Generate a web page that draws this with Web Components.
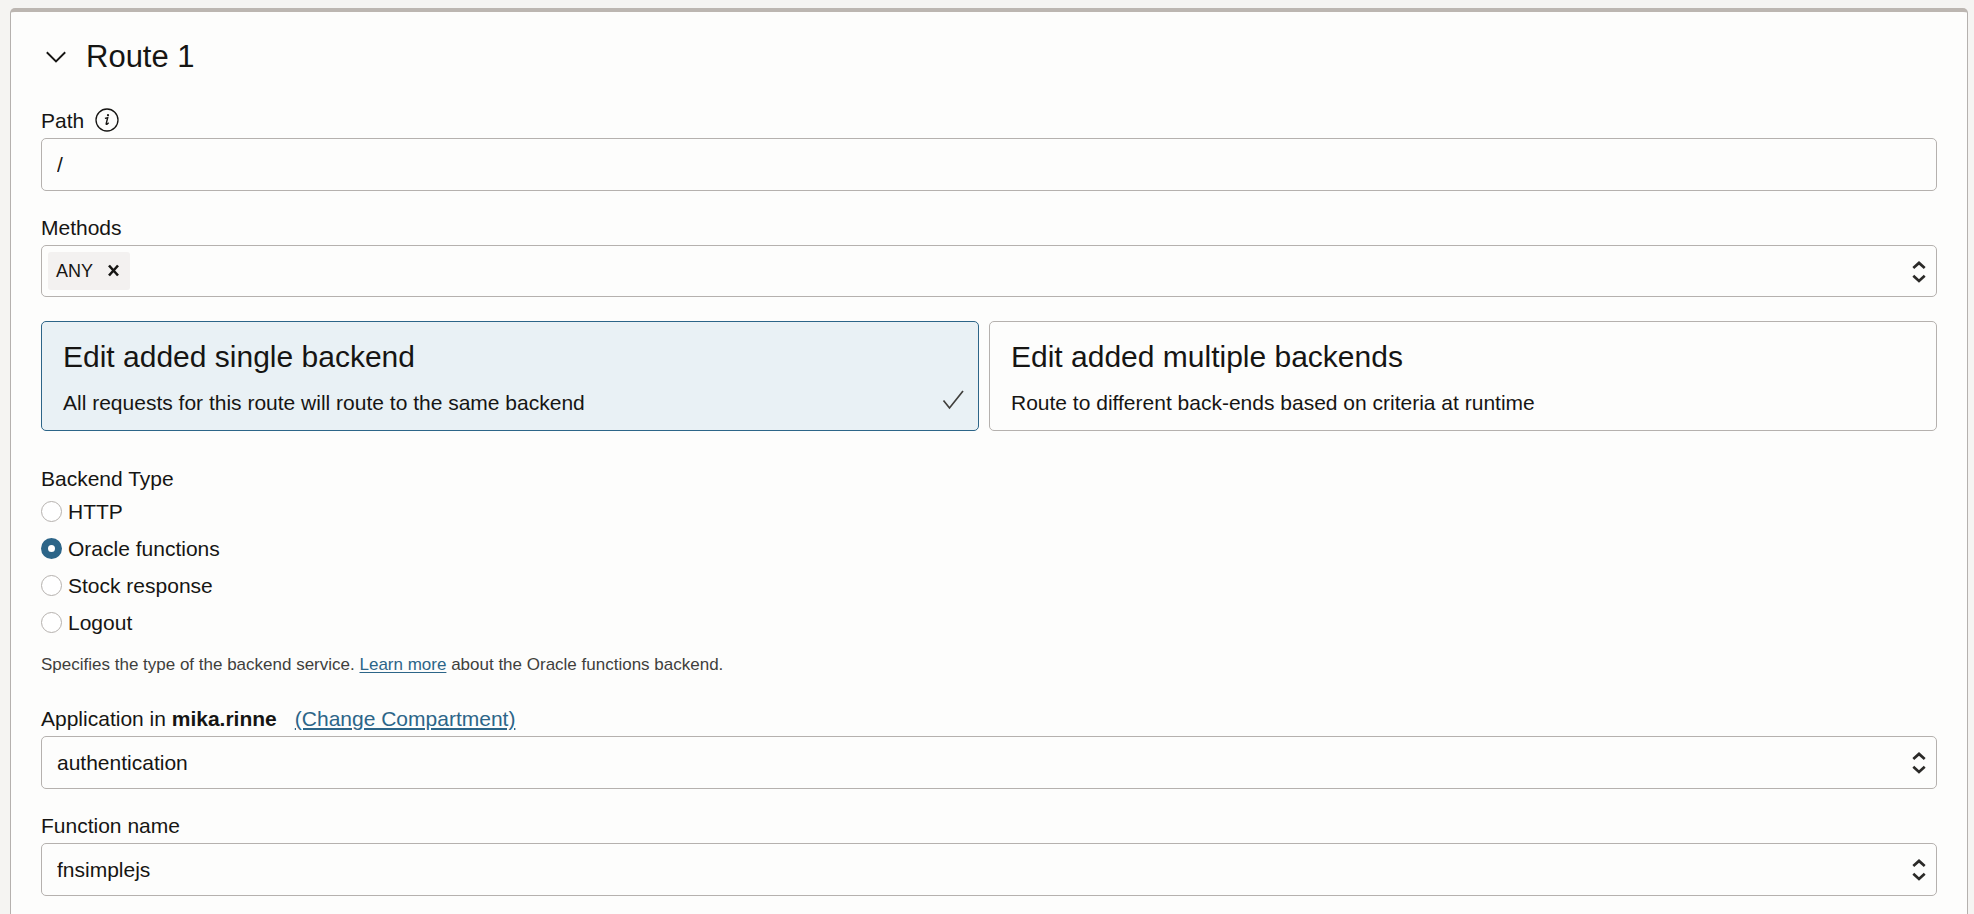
<!DOCTYPE html>
<html lang="en">
<head>
<meta charset="utf-8">
<title>Route 1</title>
<style>
  :root {
    --ink: #161513;
    --line: #b5b1ae;
    --surface: #fdfdfc;
    --accent: #2c6588;
  }
  body {
    margin: 0;
    padding: 8px 6px 0 10px;
    box-sizing: border-box;
    min-height: 100vh;
    display: flex;
    flex-direction: column;
    background: #f5f4f2;
    color: var(--ink);
    font: 21px/26px "Liberation Sans", Arial, sans-serif;
  }
  route-panel { flex: 1; display: flex; flex-direction: column; }
  .choices { display: grid; grid-template-columns: 1fr 1fr; }
  .choices choice-card:first-child { margin-right: 10px; }
</style>
</head>
<body>
<route-panel>
  <span slot="title">Route 1</span>
  <text-field value="/">Path</text-field>
  <tag-field tag="ANY">Methods</tag-field>
  <div class="choices">
    <choice-card selected>
      <span slot="title">Edit added single backend</span>
      All requests for this route will route to the same backend
    </choice-card>
    <choice-card>
      <span slot="title">Edit added multiple backends</span>
      Route to different back-ends based on criteria at runtime
    </choice-card>
  </div>
  <radio-list legend="Backend Type" options="HTTP,Oracle functions,Stock response,Logout" value="Oracle functions">
    Specifies the type of the backend service. <help-link>Learn more</help-link> about the Oracle functions backend.
  </radio-list>
  <select-field value="authentication">Application in <b>mika.rinne</b>
    <help-link slot="action">(Change Compartment)</help-link>
  </select-field>
  <select-field value="fnsimplejs">Function name</select-field>
</route-panel>

<script>
const base = `*, ::before, ::after { box-sizing: border-box; } :host { display: block; }
  input, button, select { font: inherit; color: inherit; margin: 0; }`;

const fieldStyle = `
  .head { display: flex; align-items: center; height: 26px; margin-bottom: 4px; }
  .box { display: flex; align-items: center; position: relative; width: 100%; border: 1px solid var(--line); border-radius: 5px; background: var(--surface); }
  .arrows { position: absolute; right: 10px; top: 14px; width: 14px; height: 24px; pointer-events: none; }`;

const arrows = `<svg class="arrows" viewBox="0 0 14 24" fill="none" stroke="#2b2a28" stroke-width="2.7" aria-hidden="true">
  <path d="M1.300 8 7 2.900l5.700 5.100M1.300 15.800 7 20.900l5.700-5.100"/></svg>`;

function define(name, render) {
  customElements.define(name, class extends HTMLElement {
    constructor() {
      super();
      const template = document.createElement("template");
      template.innerHTML = render(this);
      this.attachShadow({ mode: "open" }).append(template.content.cloneNode(true));
    }
  });
}

define("route-panel", () => `<style>${base}
  section { flex: 1; border: 1px solid var(--line); border-top: 4px solid #bcb6b1; border-bottom: 0; border-radius: 5px 5px 0 0; background: var(--surface); padding: 25px 30px 0; }
  h2 { display: flex; align-items: center; margin: 0 0 31px; font-size: 31px; line-height: 40px; font-weight: 400; }
  h2 button { display: flex; padding: 0; margin-right: 15px; border: 0; background: none; }
  .body { display: flex; flex-direction: column; gap: 24px; }
</style>
<section>
  <h2><button type="button" aria-label="Collapse route" aria-expanded="true">
    <svg width="30" height="30" viewBox="0 0 30 30" fill="none" stroke="currentColor" stroke-width="1.9"><path d="M5.800 10.300 15 19.400l9.200-9.100"/></svg>
  </button><slot name="title"></slot></h2>
  <div class="body"><slot></slot></div>
</section>`);

define("text-field", el => `<style>${base}${fieldStyle}
  input { display: block; width: 100%; height: 53px; padding: 0 15px; border: 1px solid var(--line); border-radius: 5px; background: var(--surface); }
  .info { display: flex; padding: 0; margin: 0 0 2px 11px; border: 0; background: none; }
</style>
<div class="head"><label for="c"><slot></slot></label>
  <button class="info" type="button" aria-label="More information">
    <svg width="24" height="24" viewBox="0 0 24 24" fill="none" stroke="currentColor"><circle cx="12" cy="12" r="11" stroke-width="1.300"/>
    <path d="M9.900 10.400 12.700 9.700 11.200 15.700q-.2 1 .6.600l1.900-1.500" stroke-width="1.400"/><circle cx="13" cy="7.200" r="1.100" fill="currentColor" stroke="none"/></svg>
  </button></div>
<input id="c" type="text" value="${el.getAttribute("value")}">`);

define("tag-field", el => `<style>${base}${fieldStyle}
  .box { height: 52px; padding: 0 6px; }
  .tag { display: flex; align-items: center; gap: 14px; height: 38px; padding: 0 10px 0 8px; border-radius: 3px; background: #f3f1f0; font-size: 18px; }
  .tag button { display: flex; padding: 0; border: 0; background: none; }
  input { flex: 1; min-width: 0; height: 100%; border: 0; outline: 0; background: none; }
</style>
<div class="head"><label for="c"><slot></slot></label></div>
<div class="box"><span class="tag">${el.getAttribute("tag")}
  <button type="button" aria-label="Remove"><svg width="13" height="14" viewBox="0 0 13 14" fill="none" stroke="currentColor" stroke-width="2.600"><path d="M2 1.500 11 11.500M11 1.500 2 11.500"/></svg></button></span>
  <input id="c" type="text" role="combobox" aria-expanded="false">${arrows}</div>`);

define("select-field", el => `<style>${base}${fieldStyle}
  select { width: 100%; height: 51px; padding: 0 15px; border: 0; border-radius: 5px; appearance: none; background: none; }
  ::slotted([slot=action]) { margin-left: 18px; }
</style>
<div class="head"><label for="c"><slot></slot></label><slot name="action"></slot></div>
<div class="box"><select id="c"><option>${el.getAttribute("value")}</option></select>${arrows}</div>`);

define("choice-card", el => `<style>${base}
  button { display: block; position: relative; width: 100%; height: 110px; padding: 3px 21px 0; border: 1px solid var(--line); border-radius: 5px; background: var(--surface); text-align: left; }
  :host([selected]) button { border-color: var(--accent); background: #e9f1f5; }
  strong { display: block; margin-bottom: 15px; font-size: 30px; line-height: 36px; font-weight: 400; }
  svg { position: absolute; right: 14px; bottom: 19px; display: none; }
  :host([selected]) svg { display: block; }
</style>
<button type="button" aria-pressed="${el.hasAttribute("selected")}"><strong><slot name="title"></slot></strong><slot></slot>
  <svg width="22" height="22" viewBox="0 0 22 22" fill="none" stroke="#403f3c" stroke-width="1.700" aria-hidden="true"><path d="M1.500 11.500 7.500 19 21 2"/></svg></button>`);

define("radio-list", el => `<style>${base}
  :host { margin: 11px 0 6px; }
  fieldset { display: flex; flex-direction: column; gap: 11px; min-width: 0; margin: 0 0 18px; padding: 0; border: 0; }
  legend { padding: 0; margin-bottom: 7px; }
  label { display: flex; align-items: center; gap: 6px; height: 26px; }
  input { appearance: none; width: 21px; height: 21px; margin-bottom: 2px; border: 1px solid var(--line); border-radius: 50%; background: #fff; }
  input:checked { border: 7px solid var(--accent); }
  p { margin: 0; color: #403f3c; font-size: 17px; line-height: 22px; }
</style>
<fieldset><legend>${el.getAttribute("legend")}</legend>
  ${el.getAttribute("options").split(",").map(o => `<label><input type="radio" name="kind" value="${o}"${o === el.getAttribute("value") ? " checked" : ""}>${o}</label>`).join("")}
</fieldset><p><slot></slot></p>`);

define("help-link", () => `<style>:host { display: inline; }
  a { color: var(--accent); text-decoration: underline; text-underline-offset: 2px; }</style><a href="#"><slot></slot></a>`);
</script>
</body>
</html>
